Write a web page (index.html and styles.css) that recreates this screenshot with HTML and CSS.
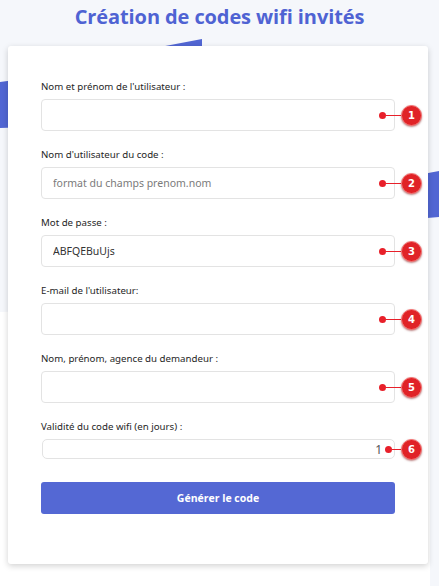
FILE: index.html
```html
<!DOCTYPE html>
<html lang="fr">
<head>
<meta charset="utf-8">
<title>Création de codes wifi invités</title>
<link rel="stylesheet" href="styles.css">
</head>
<body>
<svg class="bg" width="439" height="586" viewBox="0 0 439 586" aria-hidden="true">
  <polygon points="0,0 439,0 439,586 430,586 430,300 0,312" fill="#f5f7fb"/>
  <polygon points="0,82 60,74 60,126 0,128" fill="#5166d3"/>
  <polygon points="160,47 202,39 202,47" fill="#5166d3"/>
  <polygon points="380,182 439,171 439,217 380,222" fill="#5166d3"/>
</svg>
<main class="page">
  <h1 class="title">Création de codes wifi invités</h1>
  <form class="card">
    <div class="field">
      <label class="label">Nom et prénom de l'utilisateur :</label>
      <div class="control">
        <input class="input" type="text">
        <span class="marker"><span class="dot"></span><span class="line"></span><span class="badge">1</span></span>
      </div>
    </div>
    <div class="field">
      <label class="label">Nom d'utilisateur du code :</label>
      <div class="control">
        <input class="input" type="text" placeholder="format du champs prenom.nom">
        <span class="marker"><span class="dot"></span><span class="line"></span><span class="badge">2</span></span>
      </div>
    </div>
    <div class="field">
      <label class="label">Mot de passe :</label>
      <div class="control">
        <input class="input" type="text" value="ABFQEBuUjs">
        <span class="marker"><span class="dot"></span><span class="line"></span><span class="badge">3</span></span>
      </div>
    </div>
    <div class="field">
      <label class="label">E-mail de l'utilisateur:</label>
      <div class="control">
        <input class="input" type="text">
        <span class="marker"><span class="dot"></span><span class="line"></span><span class="badge">4</span></span>
      </div>
    </div>
    <div class="field">
      <label class="label">Nom, prénom, agence du demandeur :</label>
      <div class="control">
        <input class="input" type="text">
        <span class="marker"><span class="dot"></span><span class="line"></span><span class="badge">5</span></span>
      </div>
    </div>
    <div class="field">
      <label class="label">Validité du code wifi (en jours) :</label>
      <div class="control">
        <input class="input input-small" type="text" value="1">
        <span class="marker marker-small"><span class="dot"></span><span class="line"></span><span class="badge">6</span></span>
      </div>
    </div>
    <button class="button" type="button">Générer le code</button>
  </form>
</main>
</body>
</html>
```
FILE: styles.css
```css
html, body {
  margin: 0;
  padding: 0;
  background: #ffffff;
}
body {
  position: relative;
  width: 439px;
  height: 586px;
  overflow: hidden;
  font-family: "Noto Sans", "Open Sans", sans-serif;
  color: #333;
}
.bg {
  position: absolute;
  left: 0;
  top: 0;
  z-index: 0;
}
.page {
  position: relative;
  z-index: 1;
  display: flex;
  flex-direction: column;
  align-items: center;
}
.title {
  margin: 0;
  height: 46px;
  line-height: 33px;
  font-family: "Open Sans", "Noto Sans", sans-serif;
  font-weight: 700;
  font-size: 20px;
  color: #4f63d3;
  letter-spacing: -0.1px;
}
.card {
  box-sizing: border-box;
  width: 420px;
  height: 518px;
  margin-left: -3px;
  background: #fff;
  border-radius: 3px;
  box-shadow: 0 2px 6px rgba(0, 0, 0, 0.18);
  padding: 34px 33px 0 33px;
  display: flex;
  flex-direction: column;
  gap: 17px;
}
.field {
  display: flex;
  flex-direction: column;
  gap: 5px;
}
.label {
  font-size: 9.7px;
  line-height: 14px;
  color: #262626;
}
.control {
  position: relative;
}
.input {
  box-sizing: border-box;
  display: block;
  width: 354px;
  height: 32px;
  margin: 0;
  border: 1px solid #e3e3e3;
  border-radius: 4px;
  padding: 0 11px;
  font-family: "Noto Sans", "Open Sans", sans-serif;
  font-size: 10.5px;
  color: #333;
  background: #fff;
  outline: none;
}
.input::placeholder {
  color: #7a7a7a;
}
.input-small {
  height: 20px;
  width: 353px;
  margin-left: 1px;
  border-radius: 5px;
  text-align: right;
  padding: 0 12px;
  font-size: 12px;
  color: #555;
}
.marker {
  position: absolute;
  left: 338px;
  top: 6px;
  display: flex;
  align-items: center;
}
.marker-small {
  left: 344px;
  top: 0;
}
.marker-small .line {
  width: 9px;
}
.dot {
  width: 7px;
  height: 7px;
  border-radius: 50%;
  background: #e8202a;
}
.line {
  width: 15px;
  height: 1.5px;
  background: #e8202a;
}
.badge {
  box-sizing: border-box;
  width: 21px;
  height: 21px;
  border-radius: 50%;
  background: #e02327;
  border: 1px solid #f47a7a;
  box-shadow: 0 1px 2px rgba(120, 0, 0, 0.5);
  color: #fff;
  font-family: "DejaVu Sans", sans-serif;
  font-weight: 700;
  font-size: 10px;
  line-height: 19px;
  text-align: center;
}
.button {
  margin-top: 6px;
  width: 354px;
  height: 32px;
  border: none;
  border-radius: 3px;
  background: #5468d4;
  color: #fff;
  font-family: "Open Sans", "Noto Sans", sans-serif;
  font-weight: 700;
  font-size: 10.5px;
  cursor: pointer;
}
```
